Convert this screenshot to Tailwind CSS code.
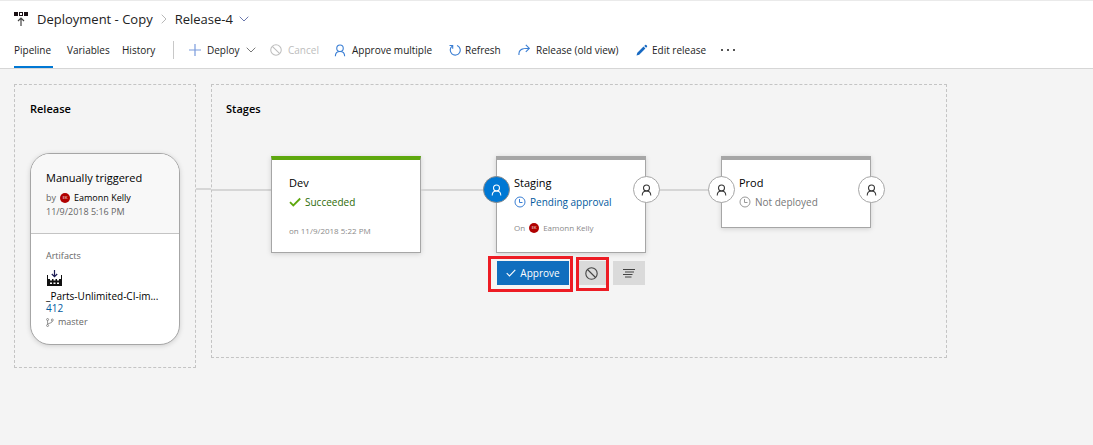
<!DOCTYPE html>
<html lang="en">
<head>
<meta charset="utf-8">
<title>Release-4 - Pipeline</title>
<script src="https://cdn.jsdelivr.net/npm/@tailwindcss/browser@4"></script>
</head>
<body class="flex min-h-screen flex-col bg-[#f4f4f4] font-['Open_Sans','Noto_Sans',sans-serif] text-[10px] leading-4 text-[#222]">
<svg class="hidden" aria-hidden="true">
  <symbol id="person" viewBox="0 0 12 14"><g fill="none" stroke="currentColor" stroke-width="1.2"><circle cx="6" cy="4.6" r="3.5"/><path d="M1 13.3C1 10.2 3 8.1 6 8.1s5 2.1 5 5.2"/></g></symbol>
  <symbol id="chevron" viewBox="0 0 10 6"><path d="M.7.7 5 5 9.300.7" fill="none" stroke="currentColor"/></symbol>
  <symbol id="block" viewBox="0 0 13 13"><g fill="none" stroke="currentColor" stroke-width="1.1"><circle cx="6.500" cy="6.500" r="5.700"/><path d="m2.500 2.500 8 8"/></g></symbol>
  <symbol id="clock" viewBox="0 0 12 12"><g fill="none" stroke="currentColor"><circle cx="6" cy="6" r="5"/><path d="M5.500 3v3.500H8.500"/></g></symbol>
</svg>
<header class="flex flex-col border-t border-b border-t-[#eaeaea] border-b-[#d6d6d6] bg-white pl-[14px]">
  <nav class="flex h-9 items-center text-[13px] leading-5" aria-label="Breadcrumb">
    <svg class="mr-2 h-[15px] w-[15px] shrink-0" viewBox="0 0 15 15"><path d="M0 0h4v4H0zM5 0h4v4H5zM10 0h4v4h-4z" fill="#1a1014"/><path d="M6 1h2v2H6z" fill="#fff"/><path d="M7 14V6M4 9l3-3 3 3" fill="none" stroke="#444" stroke-width="1.200"/></svg>
    <a href="#" class="whitespace-nowrap">Deployment - Copy</a>
    <svg class="mx-2 h-2.5 w-1.5 shrink-0 text-[#b8b8b8]" viewBox="0 0 6 10"><path d="m.7.700 4.300 4.300-4.300 4.300" fill="none" stroke="currentColor"/></svg>
    <button class="flex items-center gap-1.5 whitespace-nowrap">Release-4<svg class="h-1.5 w-2.5 shrink-0 text-[#6b78ad]"><use href="#chevron"/></svg></button>
  </nav>
  <div class="flex h-[31px] items-stretch whitespace-nowrap">
    <nav class="flex gap-[14px]" aria-label="Views">
      <a href="#" class="flex w-[39px] border-b-2 border-[#0078d4] pt-[5px]">Pipeline</a>
      <a href="#" class="w-[41px] pt-[5px]">Variables</a>
      <a href="#" class="w-[34px] pt-[5px]">History</a>
    </nav>
    <div class="mt-1 ml-[17px] h-[18px] w-px bg-[#c8c8c8]"></div>
    <div class="ml-[15px] flex h-[26px] items-center gap-4">
      <button class="flex w-[65px] items-center gap-1.5"><svg class="h-3 w-3 shrink-0" viewBox="0 0 12 12"><path d="M6 0v12M0 6h12" stroke="#7a9bdc" stroke-width="1.200"/></svg>Deploy<svg class="h-1.5 w-2.5 shrink-0 text-[#777]"><use href="#chevron"/></svg></button>
      <button disabled class="flex w-12 items-center gap-1.5 text-[#bdbdbd]"><svg class="h-3 w-3 shrink-0"><use href="#block"/></svg>Cancel</button>
      <button class="flex w-[99px] items-center gap-1.5"><svg class="h-[13px] w-3 shrink-0 text-[#3b7fd4]"><use href="#person"/></svg>Approve multiple</button>
      <button class="flex w-[53px] items-center gap-1"><svg class="h-3 w-3 shrink-0" viewBox="0 0 12 12"><path d="M8 1.400A5 5 0 1 1 3.200 2.100M.5 1.500h3.200v3.200" fill="none" stroke="#3b7fd4" stroke-width="1.100"/></svg>Refresh</button>
      <button class="flex w-[102px] items-center gap-1.5"><svg class="h-3 w-3 shrink-0" viewBox="0 0 12 12"><path d="M1 11C.3 6 3.500 4.200 11 4.300M7.800.8l3.500 3.500-3.500 3.500" fill="none" stroke="#3b7fd4" stroke-width="1.100"/></svg>Release (old view)</button>
      <button class="flex w-[69px] items-center gap-1"><svg class="h-3 w-3 shrink-0" viewBox="0 0 12 12"><path d="M.5 11.500 1.300 8.800l6.200-6.200 1.900 1.900-6.200 6.200zM8.200 1.900l1-1c.8-.6 2.500 1.100 1.900 1.900l-1 1z" fill="#1769c2"/></svg>Edit release</button>
      <button aria-label="More" class="flex gap-1"><i class="size-0.5 bg-[#555]"></i><i class="size-0.5 bg-[#555]"></i><i class="size-0.5 bg-[#555]"></i></button>
    </div>
  </div>
</header>
<main class="flex items-start px-[14px] pt-[15px]">
  <section class="w-[182px] shrink-0 border border-dashed border-[#c4c4c4] px-[15px] pb-[22px]">
    <h2 class="mt-4 text-[11px] font-semibold text-black">Release</h2>
    <div class="mt-9 overflow-hidden rounded-[20px] border border-[#a6a6a6] bg-white shadow-[0_1px_5px_rgba(0,0,0,0.15)]">
      <div class="h-20 border-b border-[#c4c4c4] bg-[#f8f8f8] px-[15px] pt-4">
        <h3 class="text-[11px] text-black">Manually triggered</h3>
        <p class="mt-1 flex items-center gap-1 text-[9px] text-[#666]">by<span class="flex size-2.5 items-center justify-center rounded-full bg-[#b00000] text-[4px] text-white">EK</span><span class="text-black">Eamonn Kelly</span></p>
        <p class="-mt-0.5 text-[9px] text-[#666]">11/9/2018 5:16 PM</p>
      </div>
      <div class="h-[110px] px-[15px] pt-3.5">
        <h3 class="text-[9px] text-[#666]">Artifacts</h3>
        <svg class="mt-1.5 ml-px h-4 w-[15px]" viewBox="0 0 15 16"><path d="M0 5h1v4h13V5h1v11H0z" fill="#111"/><path d="M3 9h2v1.500H3zM6.500 9h2v1.500h-2zM10 9h2v1.500h-2zM3 12.500h2V14H3zM6.500 12.500h2V14h-2zM10 12.500h2V14h-2z" fill="#fff"/><path d="M7.500 0v6.500M4.800 4 7.500 6.700 10.200 4" fill="none" stroke="#1d1d55" stroke-width="1.200"/></svg>
        <p class="mt-0.5 whitespace-nowrap text-black">_Parts-Unlimited-CI-im...</p>
        <a href="#" class="-mt-1 block w-fit text-[#005a9e]">412</a>
        <p class="-mt-0.5 flex items-center gap-1 text-[9px] text-[#666]"><svg class="h-[9px] w-2" viewBox="0 0 8 9" fill="none" stroke="#777" stroke-width=".8"><circle cx="1.600" cy="1.500" r="1"/><circle cx="6.300" cy="2" r="1"/><circle cx="1.600" cy="7.500" r="1"/><path d="M1.600 2.500v4C2 4.500 6 6 6.300 3"/></svg>master</p>
      </div>
    </div>
  </section>
  <div class="mt-[104px] h-0.5 w-[15px] shrink-0 bg-[#d6d6d6]"></div>
  <section class="h-[274px] shrink-0 border border-dashed border-[#c4c4c4] pr-[75px]">
    <h2 class="mt-4 ml-[14px] text-[11px] font-semibold text-black">Stages</h2>
    <div class="mt-[39px] flex items-start">
      <div class="mt-[33px] h-0.5 w-[59px] bg-[#d6d6d6]"></div>
      <article class="h-[97px] w-[150px] border border-t-4 border-[#a6a6a6] border-t-[#5ea80e] bg-white pt-[15px] pl-[17px] shadow-[0_1px_5px_rgba(0,0,0,0.15)]">
        <h3 class="text-[11px] text-black">Dev</h3>
        <p class="mt-[3px] flex items-center gap-1 text-[#2e6b06]"><svg class="h-2.5 w-3" viewBox="0 0 12 10"><path d="m1 5.200 3.300 3.300L11.200 1.500" fill="none" stroke="#5ea80e" stroke-width="1.800"/></svg>Succeeded</p>
        <p class="mt-[13px] text-[8px] text-[#8a8a8a]">on 11/9/2018 5:22 PM</p>
      </article>
      <div class="mt-[33px] h-0.5 w-[75px] bg-[#d6d6d6]"></div>
      <div>
        <article class="relative h-[97px] w-[150px] border border-t-4 border-[#a6a6a6] bg-white pt-[15px] pl-[17px] shadow-[0_1px_5px_rgba(0,0,0,0.15)]">
          <h3 class="text-[11px] text-black">Staging</h3>
          <a href="#" class="mt-[3px] flex items-center gap-1 text-[#005a9e]"><svg class="size-3 text-[#3b7fd4]"><use href="#clock"/></svg>Pending approval</a>
          <p class="mt-2.5 flex items-center gap-1 text-[8px] text-[#8a8a8a]">On<span class="flex size-2.5 items-center justify-center rounded-full bg-[#b00000] text-[4px] text-white">EK</span>Eamonn Kelly</p>
          <button aria-label="Pre-deployment approval" class="absolute top-4 -left-[14px] flex size-[27px] items-center justify-center rounded-full border border-[#8a8a8a] bg-[#0078d4] text-white"><svg class="h-3 w-[11px]"><use href="#person"/></svg></button>
          <button aria-label="Post-deployment approval" class="absolute top-4 -right-[15px] flex size-[27px] items-center justify-center rounded-full border border-[#a6a6a6] bg-white text-[#333]"><svg class="h-3 w-[11px]"><use href="#person"/></svg></button>
        </article>
        <div class="mt-2 ml-px flex">
          <div class="relative mr-2">
            <button class="flex h-6 w-[72px] items-center justify-center gap-1 bg-[#106ebe] text-white"><svg class="h-2 w-2.5" viewBox="0 0 10 8"><path d="m.7 4.200 2.800 2.800L9.300.8" fill="none" stroke="#fff" stroke-width="1.100"/></svg>Approve</button>
            <div class="pointer-events-none absolute -top-[5px] -right-1 -bottom-[7px] -left-[9px] border-3 border-[#ed1c24]"></div>
          </div>
          <div class="relative mr-1">
            <button aria-label="Cancel" class="flex h-6 w-8 items-center justify-center bg-[#dadada] pr-1 text-[#444]"><svg class="size-[13px]"><use href="#block"/></svg></button>
            <div class="pointer-events-none absolute -top-1 right-0 -bottom-1.5 -left-px border-3 border-[#ed1c24]"></div>
          </div>
          <button aria-label="Logs" class="flex h-6 w-8 items-center justify-center bg-[#dadada]"><svg class="h-[9px] w-3" viewBox="0 0 12 9"><path d="M0 .5h12M2 3h9M0 5.500h9.500M2 8h6.500" stroke="#444"/></svg></button>
        </div>
      </div>
      <div class="mt-[33px] h-0.5 w-[75px] bg-[#d6d6d6]"></div>
      <article class="relative h-[72px] w-[150px] border border-t-4 border-[#a6a6a6] bg-white pt-[15px] pl-[17px] shadow-[0_1px_5px_rgba(0,0,0,0.15)]">
        <h3 class="text-[11px] text-black">Prod</h3>
        <p class="mt-[3px] flex items-center gap-1 text-[#777]"><svg class="size-3 text-[#999]"><use href="#clock"/></svg>Not deployed</p>
        <button aria-label="Pre-deployment approval" class="absolute top-4 -left-[14px] flex size-[27px] items-center justify-center rounded-full border border-[#a6a6a6] bg-white text-[#333]"><svg class="h-3 w-[11px]"><use href="#person"/></svg></button>
        <button aria-label="Post-deployment approval" class="absolute top-4 -right-[15px] flex size-[27px] items-center justify-center rounded-full border border-[#a6a6a6] bg-white text-[#333]"><svg class="h-3 w-[11px]"><use href="#person"/></svg></button>
      </article>
    </div>
  </section>
</main>
</body>
</html>
